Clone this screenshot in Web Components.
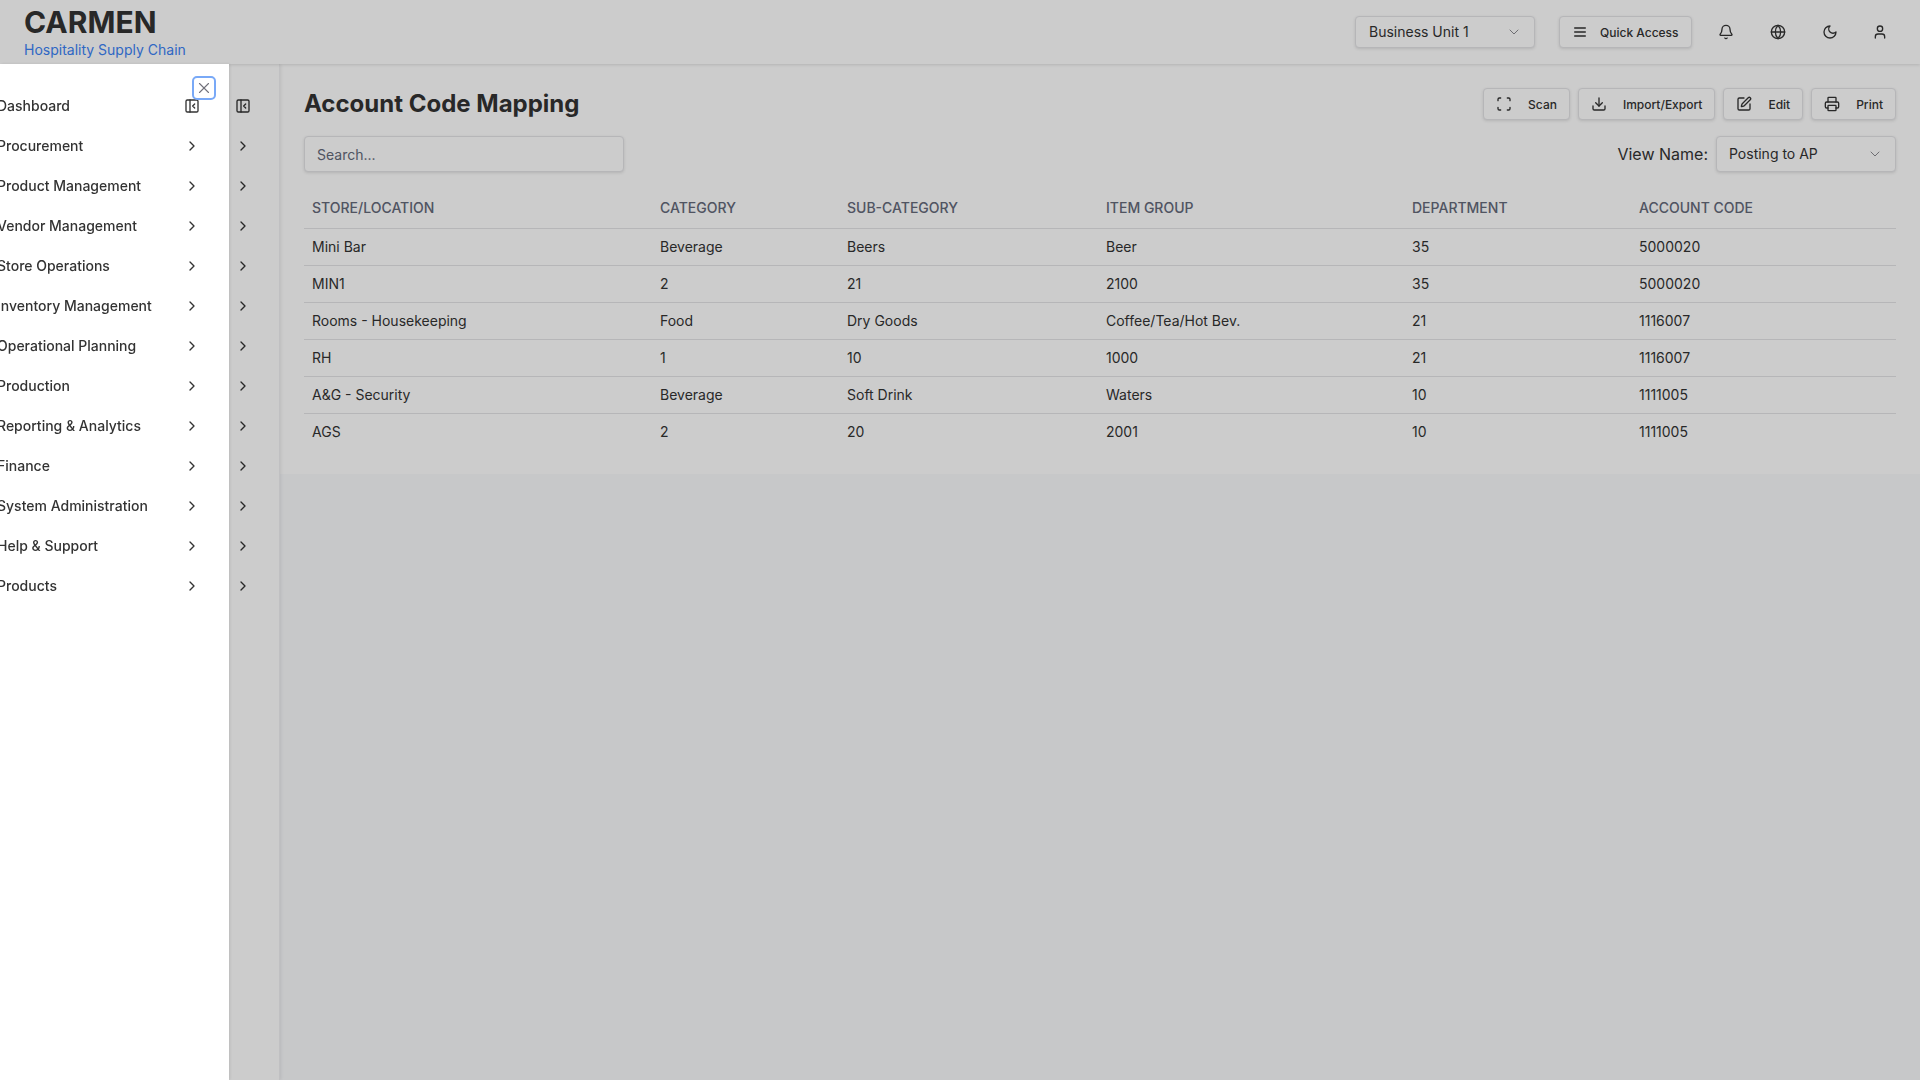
<!DOCTYPE html>
<html lang="en">
<head>
<meta charset="utf-8">
<title>Account Code Mapping</title>
<style>
  html, body { margin: 0; height: 100%; }
  body { font-family: Inter, "Liberation Sans", sans-serif; color: #333; background: #f9fafc; overflow: hidden; }
  carmen-shell { height: 100vh; }
</style>
</head>
<body>
<carmen-shell>
  <carmen-header slot="header"></carmen-header>
  <side-menu slot="sidebar" rail></side-menu>
  <mapping-page>
    <span slot="title">Account Code Mapping</span>
    <tool-button slot="actions" icon="scan">Scan</tool-button>
    <tool-button slot="actions" icon="download">Import/Export</tool-button>
    <tool-button slot="actions" icon="pen">Edit</tool-button>
    <tool-button slot="actions" icon="printer">Print</tool-button>
    <mapping-table slot="table"></mapping-table>
  </mapping-page>
</carmen-shell>
<side-sheet><side-menu></side-menu></side-sheet>

<script>
const ICONS = {
    x: '<path d="M18 6 6 18"/><path d="m6 6 12 12"/>',
    panel: '<rect x="3" y="3" width="18" height="18" rx="2"/><path d="M9 3v18"/><path d="m16 15-3-3 3-3"/>',
    right: '<path d="m9 18 6-6-6-6"/>',
    down: '<path d="m6 9 6 6 6-6"/>',
    menu: '<path d="M4 12h16"/><path d="M4 18h16"/><path d="M4 6h16"/>',
    bell: '<path d="M10.268 21a2 2 0 0 0 3.464 0"/><path d="M3.262 15.326A1 1 0 0 0 4 17h16a1 1 0 0 0 .74-1.673C19.41 13.956 18 12.499 18 8A6 6 0 0 0 6 8c0 4.499-1.411 5.956-2.738 7.326"/>',
    globe: '<circle cx="12" cy="12" r="10"/><path d="M12 2a14.5 14.5 0 0 0 0 20 14.5 14.5 0 0 0 0-20"/><path d="M2 12h20"/>',
    moon: '<path d="M12 3a6 6 0 0 0 9 9 9 9 0 1 1-9-9Z"/>',
    user: '<path d="M19 21v-2a4 4 0 0 0-4-4H9a4 4 0 0 0-4 4v2"/><circle cx="12" cy="7" r="4"/>',
    scan: '<path d="M3 7V5a2 2 0 0 1 2-2h2"/><path d="M17 3h2a2 2 0 0 1 2 2v2"/><path d="M21 17v2a2 2 0 0 1-2 2h-2"/><path d="M7 21H5a2 2 0 0 1-2-2v-2"/>',
    download: '<path d="M21 15v4a2 2 0 0 1-2 2H5a2 2 0 0 1-2-2v-4"/><path d="m7 10 5 5 5-5"/><path d="M12 15V3"/>',
    pen: '<path d="M12 3H5a2 2 0 0 0-2 2v14a2 2 0 0 0 2 2h14a2 2 0 0 0 2-2v-7"/><path d="M18.375 2.625a1 1 0 0 1 3 3l-9.013 9.014a2 2 0 0 1-.853.505l-2.873.84a.5.5 0 0 1-.62-.62l.84-2.873a2 2 0 0 1 .506-.852z"/>',
    printer: '<path d="M6 18H4a2 2 0 0 1-2-2v-5a2 2 0 0 1 2-2h16a2 2 0 0 1 2 2v5a2 2 0 0 1-2 2h-2"/><path d="M6 9V3a1 1 0 0 1 1-1h10a1 1 0 0 1 1 1v6"/><rect x="6" y="14" width="12" height="8" rx="1"/>'
};

const MENU = ['Dashboard', 'Procurement', 'Product Management', 'Vendor Management', 'Store Operations',
    'Inventory Management', 'Operational Planning', 'Production', 'Reporting & Analytics', 'Finance',
    'System Administration', 'Help & Support', 'Products'];

const COLUMNS = ['Store/Location', 'Category', 'Sub-Category', 'Item Group', 'Department', 'Account Code'];

const ROWS = [
    ['Mini Bar', 'Beverage', 'Beers', 'Beer', '35', '5000020'],
    ['MIN1', '2', '21', '2100', '35', '5000020'],
    ['Rooms - Housekeeping', 'Food', 'Dry Goods', 'Coffee/Tea/Hot Bev.', '21', '1116007'],
    ['RH', '1', '10', '1000', '21', '1116007'],
    ['A&G - Security', 'Beverage', 'Soft Drink', 'Waters', '10', '1111005'],
    ['AGS', '2', '20', '2001', '10', '1111005']
];

class AppIcon extends HTMLElement {
    constructor() {
        super();
        this.attachShadow({ mode: 'open' });
    }

    connectedCallback() {
        const size = this.getAttribute('size') || 16;
        const weight = this.getAttribute('weight') || 2;
        this.shadowRoot.innerHTML = `
            <style>
                :host { display: inline-flex; flex: none; }
                svg { display: block; fill: none; stroke: currentColor; stroke-linecap: round; stroke-linejoin: round; }
            </style>
            <svg width="${size}" height="${size}" viewBox="0 0 24 24" stroke-width="${weight}">${ICONS[this.getAttribute('name')]}</svg>
        `;
    }
}
customElements.define('app-icon', AppIcon);

class CarmenShell extends HTMLElement {
    constructor() {
        super();
        this.attachShadow({ mode: 'open' });
        this.shadowRoot.innerHTML = `
            <style>
                :host { display: grid; grid-template-columns: 280px 1fr; grid-template-rows: 64px 1fr; }
                .top { grid-column: 1 / 3; display: block; position: relative; z-index: 2; }
                .side { display: block; background: #fff; box-shadow: 1px 0 3px rgba(0,0,0,0.08); border-right: 1px solid #f1f1f3; box-sizing: border-box; position: relative; z-index: 1; }
            </style>
            <div class="top"><slot name="header"></slot></div>
            <div class="side"><slot name="sidebar"></slot></div>
            <slot></slot>
        `;
    }
}
customElements.define('carmen-shell', CarmenShell);

class SelectBox extends HTMLElement {
    constructor() {
        super();
        this.attachShadow({ mode: 'open' });
        this.shadowRoot.innerHTML = `
            <style>
                :host { display: flex; align-items: center; justify-content: space-between; box-sizing: border-box; height: 36px; padding: 0 12px 1px 12px; font-size: 14px; background: #fff; border: 1px solid #e4e4e7; border-radius: 4px; box-shadow: 0 1px 3px rgba(0,0,0,0.12); color: #333; }
                app-icon { color: #8a8a8f; }
            </style>
            <slot></slot>
            <app-icon name="down" size="16" weight="1.5"></app-icon>
        `;
    }
}
customElements.define('select-box', SelectBox);

class ToolButton extends HTMLElement {
    constructor() {
        super();
        this.attachShadow({ mode: 'open' });
    }

    connectedCallback() {
        this.shadowRoot.innerHTML = `
            <style>
                :host { display: inline-flex; align-items: center; gap: var(--tool-gap, 16px); box-sizing: border-box; height: 32px; padding: 0 12px; font-size: 12px; font-weight: 500; background: #fff; border: 1px solid #e4e4e7; border-radius: 4px; box-shadow: 0 1px 3px rgba(0,0,0,0.12); color: #333; white-space: nowrap; }
            </style>
            <app-icon name="${this.getAttribute('icon')}" size="16"></app-icon>
            <slot></slot>
        `;
    }
}
customElements.define('tool-button', ToolButton);

class CarmenHeader extends HTMLElement {
    constructor() {
        super();
        this.attachShadow({ mode: 'open' });
        this.shadowRoot.innerHTML = `
            <style>
                :host { display: flex; align-items: center; box-sizing: border-box; height: 64px; padding: 0 22px 0 24px; background: #fff; box-shadow: 0 1px 3px rgba(0,0,0,0.12); }
                .brand { flex: 1; }
                .name { font-size: 30px; line-height: 36px; font-weight: 700; }
                .tag { font-size: 14px; line-height: 20px; color: #3b82f6; }
                .unit { width: 180px; height: 32px; margin-right: 24px; padding-left: 13px; }
                tool-button { --tool-gap: 12px; margin-right: 26px; width: 133px; }
                .icons { display: flex; align-items: center; gap: 36px; padding-right: 8px; }
                .icons app-icon:last-child { margin-left: -2px; margin-right: 2px; }
            </style>
            <div class="brand">
                <div class="name">CARMEN</div>
                <div class="tag">Hospitality Supply Chain</div>
            </div>
            <select-box class="unit">Business Unit 1</select-box>
            <tool-button icon="menu">Quick Access</tool-button>
            <div class="icons">
                <app-icon name="bell" size="16"></app-icon>
                <app-icon name="globe" size="16"></app-icon>
                <app-icon name="moon" size="16"></app-icon>
                <app-icon name="user" size="16"></app-icon>
            </div>
        `;
    }
}
customElements.define('carmen-header', CarmenHeader);

class SideMenu extends HTMLElement {
    constructor() {
        super();
        this.attachShadow({ mode: 'open' });
    }

    connectedCallback() {
        // the rail behind the open sheet only shows its icons, the labels sit under the sheet
        const rail = this.hasAttribute('rail');
        this.shadowRoot.innerHTML = `
            <style>
                :host { display: block; width: 280px; box-sizing: border-box; padding: 22px 29px 0 48px; font-size: 14px; font-weight: 500; color: #333; }
                .row { display: flex; align-items: center; justify-content: space-between; height: 40px; white-space: nowrap; }
                span { padding-bottom: 2px; }
            </style>
            ${MENU.map((label, i) => `
                <div class="row"><span>${rail ? '' : label.replace('&', '&amp;')}</span><app-icon name="${i === 0 ? 'panel' : 'right'}" size="16"></app-icon></div>
            `).join('')}
        `;
    }
}
customElements.define('side-menu', SideMenu);

class SideSheet extends HTMLElement {
    constructor() {
        super();
        this.attachShadow({ mode: 'open' });
        this.shadowRoot.innerHTML = `
            <style>
                :host { display: block; }
                .overlay { position: fixed; inset: 0; background: rgba(0,0,0,0.2); z-index: 10; }
                .sheet { position: fixed; left: 0; top: 64px; bottom: 0; width: 229px; overflow: hidden; background: #fff; z-index: 11; box-shadow: 1px 0 3px rgba(0,0,0,0.1); }
                .inner { margin-left: -51px; }
                .close { position: absolute; top: 12px; left: 192px; display: flex; align-items: center; justify-content: center; width: 24px; height: 24px; box-sizing: border-box; border: 2px solid #79a9f7; border-radius: 5px; color: #71717a; }
            </style>
            <div class="overlay"></div>
            <div class="sheet">
                <div class="inner"><slot></slot></div>
                <div class="close"><app-icon name="x" size="18" weight="1.5"></app-icon></div>
            </div>
        `;
    }
}
customElements.define('side-sheet', SideSheet);

class MappingTable extends HTMLElement {
    constructor() {
        super();
        this.attachShadow({ mode: 'open' });
        this.shadowRoot.innerHTML = `
            <style>
                :host { display: block; }
                table { width: 100%; table-layout: fixed; border-collapse: collapse; font-size: 14px; }
                th, td { box-sizing: border-box; border-bottom: 1px solid #e4e4e7; }
                th { height: 40px; padding: 0 8px 1px; text-align: left; font-weight: 500; text-transform: uppercase; color: #64697a; }
                td { height: 37px; padding: 0 8px; color: #333; }
                tr:last-child td { border-bottom: 0; padding-bottom: 1px; }
            </style>
            <table>
                <colgroup>
                    <col style="width:348px"><col style="width:187px"><col style="width:259px"><col style="width:306px"><col style="width:227px"><col>
                </colgroup>
                <thead><tr>${COLUMNS.map(c => `<th>${c}</th>`).join('')}</tr></thead>
                <tbody>
                    ${ROWS.map(r => `<tr>${r.map(c => `<td>${c.replace('&', '&amp;')}</td>`).join('')}</tr>`).join('')}
                </tbody>
            </table>
        `;
    }
}
customElements.define('mapping-table', MappingTable);

class MappingPage extends HTMLElement {
    constructor() {
        super();
        this.attachShadow({ mode: 'open' });
        this.shadowRoot.innerHTML = `
            <style>
                :host { display: block; min-width: 0; }
                .card { background: #fff; padding: 24px; }
                .head { display: flex; align-items: center; justify-content: space-between; height: 32px; }
                h1 { margin: 0; font-size: 24px; line-height: 32px; font-weight: 700; }
                .actions { display: flex; gap: 8px; }
                .filters { display: flex; align-items: center; justify-content: space-between; margin: 16px 0; }
                input { width: 320px; height: 36px; box-sizing: border-box; padding: 0 12px; font: 14px Inter, "Liberation Sans", sans-serif; background: #fff; border: 1px solid #e4e4e7; border-radius: 4px; box-shadow: 0 1px 3px rgba(0,0,0,0.12); outline: none; }
                input::placeholder { color: #64697a; opacity: 1; }
                .view { display: flex; align-items: center; gap: 8px; font-size: 16px; color: #333; }
                .view select-box { width: 180px; }
            </style>
            <div class="card">
                <div class="head">
                    <h1><slot name="title"></slot></h1>
                    <div class="actions"><slot name="actions"></slot></div>
                </div>
                <div class="filters">
                    <input type="text" placeholder="Search...">
                    <div class="view">View Name: <select-box>Posting to AP</select-box></div>
                </div>
                <slot name="table"></slot>
            </div>
        `;
    }
}
customElements.define('mapping-page', MappingPage);
</script>
</body>
</html>
